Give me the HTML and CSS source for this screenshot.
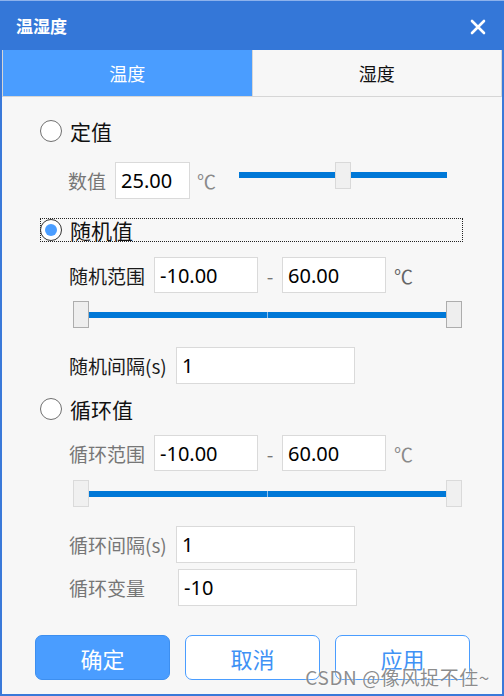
FILE: index.html
```html
<!DOCTYPE html>
<html lang="zh-CN">
<head>
  <meta charset="UTF-8">
  <title>温湿度</title>
  <link rel="stylesheet" href="styles.css">
</head>
<body>

  <div class="window">
    <div class="titlebar">
      <span class="title">温湿度</span>
      <svg class="close" width="16" height="16" viewBox="0 0 16 16">
        <path d="M2 2 L14 14 M14 2 L2 14" stroke="#fff" stroke-width="2.6" stroke-linecap="round"/>
      </svg>
    </div>

    <div class="tabs">
      <div class="tab active">温度</div>
      <div class="tab">湿度</div>
    </div>

    <div class="content">
      <!-- fixed value -->
      <div class="radio-row first">
        <span class="radio"></span>
        <span class="radio-text">定值</span>
      </div>
      <div class="row row-value disabled">
        <span class="lbl lbl-2">数值</span>
        <input class="field w-75" type="text" value="25.00" readonly>
        <span class="unit unit-wide">℃</span>
        <div class="slider">
          <div class="track"></div>
          <div class="handle" style="left: 96px"></div>
        </div>
      </div>

      <!-- random value -->
      <div class="radio-row focused">
        <span class="radio checked"></span>
        <span class="radio-text">随机值</span>
      </div>
      <div class="row row-range">
        <span class="lbl lbl-4">随机范围</span>
        <input class="field w-104" type="text" value="-10.00" readonly>
        <span class="dash">-</span>
        <input class="field w-104" type="text" value="60.00" readonly>
        <span class="unit">℃</span>
      </div>
      <div class="range">
        <div class="handle-b"></div>
        <div class="range-track"><span></span><span></span></div>
        <div class="handle-b"></div>
      </div>
      <div class="row row-interval">
        <span class="lbl lbl-s">随机间隔(s)</span>
        <input class="field w-179" type="text" value="1" readonly>
      </div>

      <!-- cyclic value -->
      <div class="radio-row third">
        <span class="radio"></span>
        <span class="radio-text">循环值</span>
      </div>
      <div class="row row-range disabled">
        <span class="lbl lbl-4">循环范围</span>
        <input class="field w-104" type="text" value="-10.00" readonly>
        <span class="dash">-</span>
        <input class="field w-104" type="text" value="60.00" readonly>
        <span class="unit">℃</span>
      </div>
      <div class="range disabled">
        <div class="handle-b"></div>
        <div class="range-track"><span></span><span></span></div>
        <div class="handle-b"></div>
      </div>
      <div class="row row-interval disabled">
        <span class="lbl lbl-s">循环间隔(s)</span>
        <input class="field w-179" type="text" value="1" readonly>
      </div>
      <div class="row row-var disabled">
        <span class="lbl lbl-v">循环变量</span>
        <input class="field w-179" type="text" value="-10" readonly>
      </div>
    </div>

    <div class="footer">
      <button class="btn primary">确定</button>
      <button class="btn">取消</button>
      <button class="btn">应用</button>
    </div>

    <div class="watermark">CSDN @像风捉不住~</div>
  </div>

</body>
</html>
```

FILE: styles.css
```css
body {
  margin: 0;
  font-family: "Noto Sans CJK SC", "Noto Sans", sans-serif;
  background: #f7f7f7;
}

.window {
  position: relative;
  width: 504px;
  height: 696px;
  box-sizing: border-box;
  border: 2px solid #3a79d9;
  border-top: 0;
  background: #f7f7f7;
}

.titlebar {
  height: 49px;
  margin: 0 -2px;
  padding: 0 18px 0 16px;
  border-top: 1px solid #8db2ec;
  background: #3477d8;
  display: flex;
  align-items: center;
  justify-content: space-between;
}

.title {
  color: #fff;
  font-size: 17px;
  font-weight: bold;
  line-height: 20px;
}

.close {
  margin-top: 2px;
}

.tabs {
  display: flex;
  height: 47px;
  box-sizing: border-box;
  border: 1px solid #d6d6d6;
  border-top: 0;
}

.tab {
  flex: 1;
  display: flex;
  align-items: center;
  justify-content: center;
  font-size: 18px;
  color: #111;
  background: #f7f7f7;
}

.tab.active {
  background: #4a9dff;
  color: #fff;
  border-right: 1px solid #d6d6d6;
}

.content {
  padding: 22px 0 0 38px;
}

/* radio rows */
.radio-row {
  display: flex;
  align-items: center;
  height: 24px;
  width: 423px;
  box-sizing: border-box;
}

.radio-row.focused {
  margin-top: 19px;
  border: 1px dotted #222;
}

.radio-row.third {
  margin-top: 13px;
}

.radio {
  width: 22px;
  height: 22px;
  box-sizing: border-box;
  border: 1.5px solid #707070;
  border-radius: 50%;
  background: #fff;
  display: flex;
  align-items: center;
  justify-content: center;
  flex-shrink: 0;
}

.radio-row.focused .radio {
  margin-left: -1px;
}

.radio.checked {
  border-color: #333;
}

.radio.checked::after {
  content: "";
  width: 12px;
  height: 12px;
  border-radius: 50%;
  background: #4a9dff;
}

.radio-text {
  margin-left: 8px;
  font-size: 21px;
  line-height: 24px;
  color: #111;
}

/* form rows */
.row {
  display: flex;
  align-items: center;
  padding-left: 29px;
  color: #1a1a1a;
  font-size: 19px;
}

.row.disabled {
  color: #767676;
}

.row-value {
  margin-top: 19px;
  padding-left: 28px;
  height: 37px;
  align-items: flex-start;
}

.row-value .lbl,
.row-value .unit {
  line-height: 37px;
}

.row-range {
  margin-top: 15px;
  height: 36px;
}

.row.disabled.row-range {
  margin-top: 14px;
}

.row-interval {
  margin-top: 19px;
  height: 37px;
}

.row-var {
  margin-top: 6px;
  height: 37px;
}

.lbl {
  flex-shrink: 0;
  white-space: nowrap;
}

.lbl-2 { width: 47px; }
.lbl-4 { width: 85px; }
.lbl-s { width: 107px; }
.lbl-v { width: 109px; }

.field {
  height: 37px;
  box-sizing: border-box;
  border: 1px solid #dadada;
  background: #fff;
  padding: 0 0 0 5px;
  font-family: "Noto Sans", "Noto Sans CJK SC", sans-serif;
  font-size: 20px;
  color: #000;
  outline: none;
}

.row-range .field {
  height: 36px;
}

.w-75 { width: 75px; }
.w-104 { width: 104px; }
.w-179 { width: 179px; }

.dash {
  width: 24px;
  text-align: center;
  color: #777;
}

.unit {
  margin-left: 8px;
  color: #666;
}

.row.disabled .unit {
  color: #8a8a8a;
}

.unit-wide {
  width: 42px;
  margin-left: 7px;
}

/* single slider */
.slider {
  position: relative;
  width: 208px;
  height: 27px;
}

.track {
  margin-top: 10px;
  height: 6px;
  background: #0078d7;
}

.handle {
  position: absolute;
  top: 0;
  width: 16px;
  height: 27px;
  box-sizing: border-box;
  border: 1px solid #d9d9d9;
  background: #f0f0f0;
}

/* range slider */
.range {
  display: flex;
  align-items: center;
  width: 389px;
  height: 27px;
  margin: 8px 0 0 33px;
}

.range.disabled {
  margin-top: 9px;
}

.handle-b {
  width: 16px;
  height: 27px;
  box-sizing: border-box;
  border: 1px solid #adadad;
  background: #eeeeee;
  flex-shrink: 0;
}

.range.disabled .handle-b {
  border-color: #dadada;
  background: #f0f0f0;
}

.range-track {
  flex: 1;
  display: flex;
  gap: 1px;
  height: 6px;
  background: #8fc0ea;
}

.range-track span {
  flex: 1;
  background: #0078d7;
}

/* buttons */
.footer {
  display: flex;
  gap: 15px;
  margin-top: 29px;
  padding-left: 33px;
}

.btn {
  width: 135px;
  height: 45px;
  border: 1.5px solid #4a9dff;
  border-radius: 7px;
  background: #fff;
  color: #3f92f5;
  font-family: "Noto Sans CJK SC", sans-serif;
  font-size: 22px;
  cursor: pointer;
}

.btn.primary {
  background: #4a9dff;
  border-color: #3d8ff0;
  color: #fff;
}

.watermark {
  position: absolute;
  right: 12px;
  bottom: 6px;
  font-size: 19px;
  line-height: 22px;
  letter-spacing: 0.6px;
  color: rgba(120, 120, 120, 0.85);
  text-shadow: 0 0 2px #fff;
  white-space: nowrap;
}
```
